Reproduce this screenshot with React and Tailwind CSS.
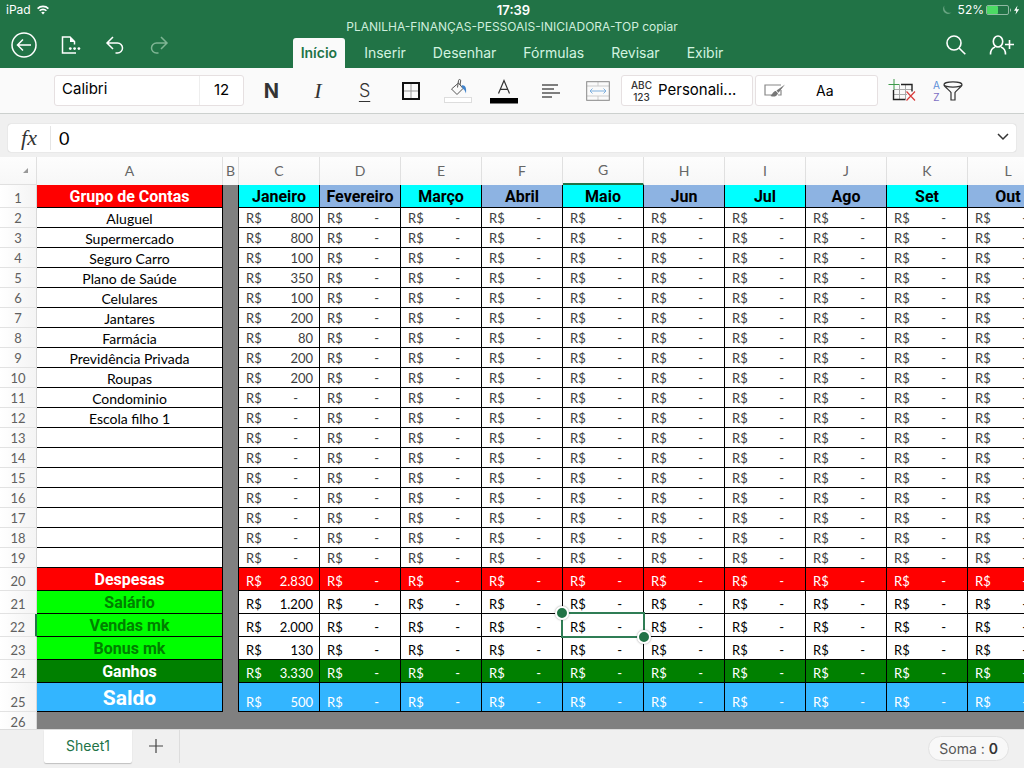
const expenses = [
  ['Aluguel', '800'],
  ['Supermercado', '800'],
  ['Seguro Carro', '100'],
  ['Plano de Saúde', '350'],
  ['Celulares', '100'],
  ['Jantares', '200'],
  ['Farmácia', '80'],
  ['Previdência Privada', '200'],
  ['Roupas', '200'],
  ['Condominio', '-'],
  ['Escola filho 1', '-'],
  ['', '-'],
  ['', '-'],
  ['', '-'],
  ['', '-'],
  ['', '-'],
  ['', '-'],
  ['', '-'],
];

const totals = [
  { label: 'Despesas', value: '2.830', height: 'h-[23px]', head: 'bg-[#ff0000] text-white text-[16px] leading-5', cell: 'bg-[#ff0000] text-white' },
  { label: 'Salário', value: '1.200', height: 'h-[23px]', head: 'bg-[#00ff00] text-[#008000] text-[16px] leading-5', cell: 'bg-white text-black' },
  { label: 'Vendas mk', value: '2.000', height: 'h-[23px]', head: 'bg-[#00ff00] text-[#008000] text-[16px] leading-5', cell: 'bg-white text-black', active: true },
  { label: 'Bonus mk', value: '130', height: 'h-[23px]', head: 'bg-[#00ff00] text-[#008000] text-[16px] leading-5', cell: 'bg-white text-black' },
  { label: 'Ganhos', value: '3.330', height: 'h-[23px]', head: 'bg-[#008000] text-white text-[16px] leading-5', cell: 'bg-[#008000] text-white' },
  { label: 'Saldo', value: '500', height: 'h-[29px]', head: 'bg-[#33b5ff] text-white text-[21px] leading-[26px]', cell: 'bg-[#33b5ff] text-white' },
];

const months = ['Janeiro', 'Fevereiro', 'Março', 'Abril', 'Maio', 'Jun', 'Jul', 'Ago', 'Set', 'Out'];
const letters = ['C', 'D', 'E', 'F', 'G', 'H', 'I', 'J', 'K', 'L'];
const tabs = ['Início', 'Inserir', 'Desenhar', 'Fórmulas', 'Revisar', 'Exibir'];

const heading = "font-['Roboto',sans-serif] font-bold";

/* ---------- icons ---------- */

const BackIcon = () => (
  <svg width="26" height="26" viewBox="0 0 26 26" fill="none" stroke="white" strokeWidth="1.5">
    <circle cx="13" cy="13" r="12" />
    <path d="M20 13H7M12 7.5 6.5 13l5.5 5.5" />
  </svg>
);

const FileIcon = () => (
  <svg width="20" height="18" viewBox="0 0 20 18" fill="none" stroke="white" strokeWidth="1.5">
    <path d="M13.5 8.5V5.5L9 1H1.5v16H15" />
    <path d="M9 1v5h5z" fill="white" stroke="none" />
    <g fill="white" stroke="none">
      <circle cx="9.3" cy="12.6" r="1.4" />
      <circle cx="13.6" cy="12.6" r="1.4" />
      <circle cx="17.9" cy="12.6" r="1.4" />
    </g>
  </svg>
);

const UndoIcon = () => (
  <svg width="20" height="18" viewBox="0 0 20 18" fill="none" stroke="white" strokeWidth="1.5">
    <path d="M8 1 2 7l6 6M2 7h10.5a5 5 0 0 1 0 10H10.5" />
  </svg>
);

const RedoIcon = () => (
  <svg width="20" height="18" viewBox="0 0 20 18" fill="none" stroke="#7fb594" strokeWidth="1.5">
    <path d="m12 1 6 6-6 6M18 7H7.5a5 5 0 0 0 0 10H9.5" />
  </svg>
);

const SearchIcon = () => (
  <svg width="20" height="20" viewBox="0 0 20 20" fill="none" stroke="white" strokeWidth="1.6">
    <circle cx="8" cy="8" r="7" />
    <path d="m13 13 6.3 6.3" />
  </svg>
);

const PersonAddIcon = () => (
  <svg width="26" height="20" viewBox="0 0 26 20" fill="none" stroke="white" strokeWidth="1.6">
    <ellipse cx="9" cy="6.5" rx="4.7" ry="5.5" />
    <path d="M1.5 19.500c0-4 1.500-6.500 4.500-7.500M16.500 19.500c0-4-1.500-6.500-4.500-7.500M20.500 5v9M16 9.500h9" />
  </svg>
);

const WifiIcon = () => (
  <svg width="12" height="10" viewBox="0 0 12 10" fill="none" stroke="white" strokeWidth="1.6">
    <path d="M.6 3.600a7.600 7.600 0 0 1 10.800 0M2.600 5.800a4.800 4.800 0 0 1 6.800 0" />
    <path d="M6 9.500 4.200 7.600a2.500 2.500 0 0 1 3.600 0z" fill="white" stroke="none" />
  </svg>
);

const MoonIcon = () => (
  <svg width="10" height="10" viewBox="0 0 10 10" fill="#6aa583">
    <path d="M2.500 .5A4.700 4.700 0 1 0 9.500 7.500 5.500 5.500 0 0 1 2.500 .5z" />
  </svg>
);

const BatteryIcon = () => (
  <svg width="35" height="10" viewBox="0 0 35 10">
    <rect x=".5" y=".5" width="22" height="9" rx="1.5" fill="none" stroke="#90b9a2" />
    <rect x="1" y="1" width="11" height="8" rx="1" fill="#4cd964" />
    <path d="M24 3.200c1.300.5 1.300 3.100 0 3.600z" fill="#b5d0c0" />
    <path d="M31.500.5 28 5.700h2.300l-.8 3.800L33.200 4.200H30.700z" fill="white" />
  </svg>
);

const BordersIcon = () => (
  <svg width="18" height="18" viewBox="0 0 18 18" fill="none">
    <path d="M9 2v14M2 9h14" stroke="#999" />
    <rect x="1" y="1" width="16" height="16" stroke="#111" strokeWidth="2" />
  </svg>
);

const FillIcon = () => (
  <svg width="28" height="26" viewBox="0 0 28 26" fill="none">
    <path d="m14.500 5 4.500 5.500-6 6-5.500-5.500zM13.500 9.500l1-7a1.100 1.100 0 0 1 2.200.3L16 7" stroke="#555" />
    <path d="M17.500 7.500c3.500-.8 5.300 2 4.500 8-1-2.500-1.500-4-3-4.500z" fill="#3f83cc" />
    <rect x=".5" y="19.500" width="27" height="5" fill="white" stroke="#ddd" />
  </svg>
);

const FontColorIcon = () => (
  <svg width="28" height="26" viewBox="0 0 28 26" fill="none">
    <path d="M8.500 15.500 14 2.500l5.500 13M10.300 11.300h7.400" stroke="#333" strokeWidth="1.200" />
    <rect y="20" width="28" height="5.500" fill="black" />
  </svg>
);

const AlignIcon = () => (
  <svg width="18" height="16" viewBox="0 0 18 16" stroke="#555" strokeWidth="1.300">
    <path d="M0 2h16M0 6h12M0 10h18M0 14h10" />
  </svg>
);

const MergeIcon = () => (
  <svg width="24" height="20" viewBox="0 0 24 20" fill="none">
    <path d="M12 1v4M12 15v4M1 5h22M1 15h22" stroke="#ccc" />
    <rect x=".7" y=".7" width="22.600" height="18.600" stroke="#888" />
    <path d="M4 10h16M6.500 7.500 4 10l2.500 2.500M17.500 7.500 20 10l-2.500 2.500" stroke="#7fb0de" />
  </svg>
);

const CellStyleIcon = () => (
  <svg width="22" height="14" viewBox="0 0 22 14" fill="none">
    <path d="M17 1H1v10h7" stroke="#888" strokeWidth="1.200" />
    <path d="M17 6v5h-3" stroke="#888" strokeWidth="1.200" />
    <path d="M21 .5 12.500 6.500l2 2.200zM11.800 7c-2.200 0-3 2.500-5.300 5 3.500 1.300 6.500.5 7.500-2.800z" fill="#777" />
  </svg>
);

const InsertDeleteIcon = () => (
  <svg width="28" height="24" viewBox="0 0 28 24" fill="none">
    <path d="M11.500 6v14M17.500 6v14M6 10.500h18M6 15.500h13" stroke="#aaa" />
    <path d="M13 5.500h11v7M5.500 11v9.500h12" stroke="#222" strokeWidth="1.400" />
    <path d="M6 0v11M.5 5.500h11" stroke="#3f9a4a" />
    <path d="m18.500 12.500 8.500 9M27 12.500l-8.500 9" stroke="#d83b3b" strokeWidth="1.200" />
  </svg>
);

const FunnelIcon = () => (
  <svg width="20" height="20" viewBox="0 0 20 20" fill="none" stroke="#333" strokeWidth="1.200">
    <ellipse cx="10" cy="3.500" rx="9" ry="2.700" />
    <path d="M1 4c.5 2 6.500 6 7 7.500V19h4v-7.500c.5-1.500 6.500-5.500 7-7.500" />
  </svg>
);

/* ---------- grid ---------- */

function Money({ value }) {
  return (
    <div className="flex justify-between pr-[6px] pl-[7px]">
      <span>R$</span>
      <span className={value === '-' ? 'pr-[15px]' : ''}>{value}</span>
    </div>
  );
}

function RowNumber({ n, active }) {
  return (
    <th
      scope="row"
      className={`border-b border-b-[#e2e2e2] bg-linear-to-r from-white to-[#f4f4f4] p-0 align-bottom font-['Lato',sans-serif] text-[13px] leading-[17px] font-normal text-[#606060] ${active ? 'border-r-2 border-r-[#217346]' : 'border-r border-r-[#d8d8d8]'}`}
    >
      {n}
    </th>
  );
}

const Gap = () => <td className="border-r border-black bg-[#808080] p-0" />;

function Selection() {
  return (
    <div className="pointer-events-none absolute -inset-[2px] z-10 border-2 border-[#2f7d55]">
      <span className="absolute -top-2 -left-2 size-[14px] rounded-full border-2 border-white bg-[#217346] shadow-[0_0_2px_rgba(0,0,0,0.4)]" />
      <span className="absolute -right-2 -bottom-2 size-[14px] rounded-full border-2 border-white bg-[#217346] shadow-[0_0_2px_rgba(0,0,0,0.4)]" />
    </div>
  );
}

function Sheet() {
  return (
    <main className="min-h-0 flex-1 overflow-hidden bg-[#808080] font-['Lato',sans-serif]">
      <table className="w-[1049px] table-fixed border-separate border-spacing-0 text-center">
        <colgroup>
          <col className="w-[37px]" />
          <col className="w-[186px]" />
          <col className="w-[16px]" />
          {letters.map((l) => <col key={l} className="w-[81px]" />)}
        </colgroup>
        <thead>
          <tr className="h-[28px] bg-linear-to-b from-[#fdfdfd] to-[#f7f7f7] text-[14px] leading-5 text-[#666]">
            <td className="border-r border-b border-[#e0e0e0] p-0">
              <svg className="ml-[23px]" width="5" height="5" viewBox="0 0 5 5"><path d="M5 0v5H0z" fill="#999" /></svg>
            </td>
            <th scope="col" className="border-r border-[#e0e0e0] p-0 font-normal">A</th>
            <th scope="col" className="border-r border-[#e0e0e0] p-0 font-normal">B</th>
            {letters.map((l) => (
              <th
                key={l}
                scope="col"
                className={`border-r border-r-[#e0e0e0] p-0 font-normal ${l === 'G' ? 'border-b-2 border-b-[#217346]' : ''}`}
              >
                {l}
              </th>
            ))}
          </tr>
        </thead>
        <tbody>
          <tr className={`h-[23px] text-[16px] leading-5 text-black ${heading}`}>
            <RowNumber n={1} />
            <td className="border-r border-b border-black bg-[#ff0000] p-0 align-bottom text-white">Grupo de Contas</td>
            <Gap />
            {months.map((m, i) => (
              <td key={m} className={`border-r border-b border-black p-0 align-bottom ${i % 2 ? 'bg-[#8db3e2]' : 'bg-[#00ffff]'}`}>{m}</td>
            ))}
          </tr>
          {expenses.map(([name, value], i) => (
            <tr key={i} className="h-[20px] text-[13px] leading-[17px]">
              <RowNumber n={i + 2} />
              <td className="border-r border-b border-black bg-white p-0 align-bottom text-[14px] text-black">{name}</td>
              <Gap />
              {letters.map((l, c) => (
                <td key={l} className="border-r border-b border-black bg-white p-0 align-bottom text-[#404040]">
                  <Money value={c === 0 ? value : '-'} />
                </td>
              ))}
            </tr>
          ))}
          {totals.map((row, i) => (
            <tr key={row.label} className={`text-[13px] leading-[17px] ${row.height}`}>
              <RowNumber n={i + 20} active={row.active} />
              <td className={`border-r border-b border-black p-0 align-bottom ${heading} ${row.head}`}>{row.label}</td>
              <Gap />
              {letters.map((l, c) => (
                <td key={l} className={`relative border-r border-b border-black p-0 align-bottom ${row.cell}`}>
                  <Money value={c === 0 ? row.value : '-'} />
                  {row.active && l === 'G' && <Selection />}
                </td>
              ))}
            </tr>
          ))}
          <tr className="h-[20px]">
            <RowNumber n={26} />
            <td colSpan={12} className="bg-[#808080] p-0" />
          </tr>
        </tbody>
      </table>
    </main>
  );
}

/* ---------- bars ---------- */

function Header() {
  return (
    <header className="bg-[#217346] text-white">
      <div className="grid h-5 grid-cols-[1fr_auto_1fr] items-center pr-[3px] pl-[6px] text-[12px] leading-5">
        <div className="flex items-center gap-[6px]">iPad <WifiIcon /></div>
        <div className="text-[13px] font-semibold">17:39</div>
        <div className="flex items-center justify-end gap-[2px]">
          <MoonIcon />
          <span className="ml-1">52%</span>
          <BatteryIcon />
        </div>
      </div>
      <div className="grid grid-cols-[1fr_auto_1fr]">
        <div className="flex items-center gap-6 pt-[2px] pl-[11px]">
          <button aria-label="Voltar"><BackIcon /></button>
          <button aria-label="Arquivo"><FileIcon /></button>
          <button aria-label="Desfazer"><UndoIcon /></button>
          <button aria-label="Refazer"><RedoIcon /></button>
        </div>
        <div className="flex flex-col items-center gap-[5px]">
          <h1 className="text-[12px] leading-[13px] text-[#cfeedd]">PLANILHA-FINANÇAS-PESSOAIS-INICIADORA-TOP copiar</h1>
          <nav className="flex gap-[11px] text-[14px] leading-[30px]">
            {tabs.map((t, i) => (
              <button
                key={t}
                className={i === 0 ? 'rounded-t-[3px] bg-[#fafafa] px-2 font-semibold text-[#217346]' : 'px-2 text-[#d3f3e0]'}
              >
                {t}
              </button>
            ))}
          </nav>
        </div>
        <div className="flex items-center justify-end gap-[23px] pt-[2px] pr-[9px]">
          <button aria-label="Pesquisar"><SearchIcon /></button>
          <button aria-label="Compartilhar"><PersonAddIcon /></button>
        </div>
      </div>
    </header>
  );
}

const toolButton = 'flex h-full items-center justify-center';

function Toolbar() {
  return (
    <div className="flex h-[46px] items-center border-b border-[#ccd0ce] bg-[#fafafa] pl-[54px] text-black">
      <div className="flex h-[31px] w-[190px] rounded-[3px] border border-[#e6e0e1] bg-white">
        <input aria-label="Fonte" defaultValue="Calibri" className="w-[145px] border-r border-[#eee] pb-[2px] pl-[7px] text-[15px] outline-none" />
        <input aria-label="Tamanho da fonte" defaultValue="12" className="w-[43px] text-center text-[15px] outline-none" />
      </div>
      <div className="ml-1 grid h-full w-[373px] grid-cols-8 text-[#333]">
        <button className={`${toolButton} text-[20px] font-bold`}>N</button>
        <button className={`${toolButton} font-['Liberation_Serif',serif] text-[22px] italic`}>I</button>
        <button className={`${toolButton} text-[18px] font-light underline underline-offset-4`}>S</button>
        <button aria-label="Bordas" className={toolButton}><BordersIcon /></button>
        <button aria-label="Cor de preenchimento" className={toolButton}><FillIcon /></button>
        <button aria-label="Cor da fonte" className={toolButton}><FontColorIcon /></button>
        <button aria-label="Alinhamento" className={toolButton}><AlignIcon /></button>
        <button aria-label="Mesclar" className={toolButton}><MergeIcon /></button>
      </div>
      <button className="flex h-[31px] w-[132px] items-center gap-[6px] rounded-[3px] border border-[#e6e0e1] bg-white pl-[9px] text-[15px]">
        <span className="text-[10px] leading-3 font-medium text-[#333]">ABC<br />123</span>
        Personali...
      </button>
      <button className="ml-[2px] flex h-[31px] w-[123px] items-center gap-[30px] rounded-[3px] border border-[#e6e0e1] bg-white pl-2 text-[14px]">
        <CellStyleIcon />
        Aa
      </button>
      <button aria-label="Inserir e excluir" className="ml-[10px]"><InsertDeleteIcon /></button>
      <button aria-label="Classificar e filtrar" className="ml-[17px] flex items-center gap-[3px]">
        <span className="text-[10px] leading-3 text-[#5b8fd8]">A<br /><span className="text-[#7d6fc4]">Z</span></span>
        <FunnelIcon />
      </button>
    </div>
  );
}

function FormulaBar() {
  return (
    <div className="bg-[#f0f0f0] px-2 pt-[10px] pb-[5px]">
      <div className="flex h-[28px] items-center rounded-[3px] bg-white shadow-[0_0_1px_rgba(0,0,0,0.3)]">
        <label htmlFor="formula" className="w-[43px] border-r border-[#e5e5e5] text-center font-['Liberation_Serif',serif] text-[22px] leading-6 text-[#333] italic">fx</label>
        <input id="formula" defaultValue="0" className="min-w-0 flex-1 pl-2 font-['Lato',sans-serif] text-[18px] text-black outline-none" />
        <button aria-label="Expandir" className="pr-[7px] pb-[2px]">
          <svg width="12" height="8" viewBox="0 0 12 8" fill="none" stroke="#333" strokeWidth="1.500"><path d="m1 1 5 5 5-5" /></svg>
        </button>
      </div>
    </div>
  );
}

function Footer() {
  return (
    <footer className="flex h-[39px] items-start border-t border-[#dcdcdc] bg-[#f0f0f0] pr-[15px] pl-11 text-[14px]">
      <button className="h-[33px] w-[88px] rounded-b-[2px] bg-white pb-[2px] text-[#217346] shadow-[0_1px_1px_rgba(0,0,0,0.2)]">Sheet1</button>
      <button aria-label="Nova planilha" className="flex h-[33px] w-12 items-center justify-center border-r border-[#ddd] pb-[2px]">
        <svg width="14" height="14" viewBox="0 0 14 14" stroke="#444" strokeWidth="1.200"><path d="M7 0v14M0 7h14" /></svg>
      </button>
      <button className="mt-[6px] ml-auto h-[25px] rounded-full border border-[#e2e2e2] bg-[#f8f8f8] px-[10px] text-[#555]">
        Soma : <span className="font-semibold text-[#333]">0</span>
      </button>
    </footer>
  );
}

export default function App() {
  return (
    <div className="flex h-screen flex-col overflow-hidden bg-[#f0f0f0] font-['Inter',sans-serif]">
      <Header />
      <Toolbar />
      <FormulaBar />
      <Sheet />
      <Footer />
    </div>
  );
}
